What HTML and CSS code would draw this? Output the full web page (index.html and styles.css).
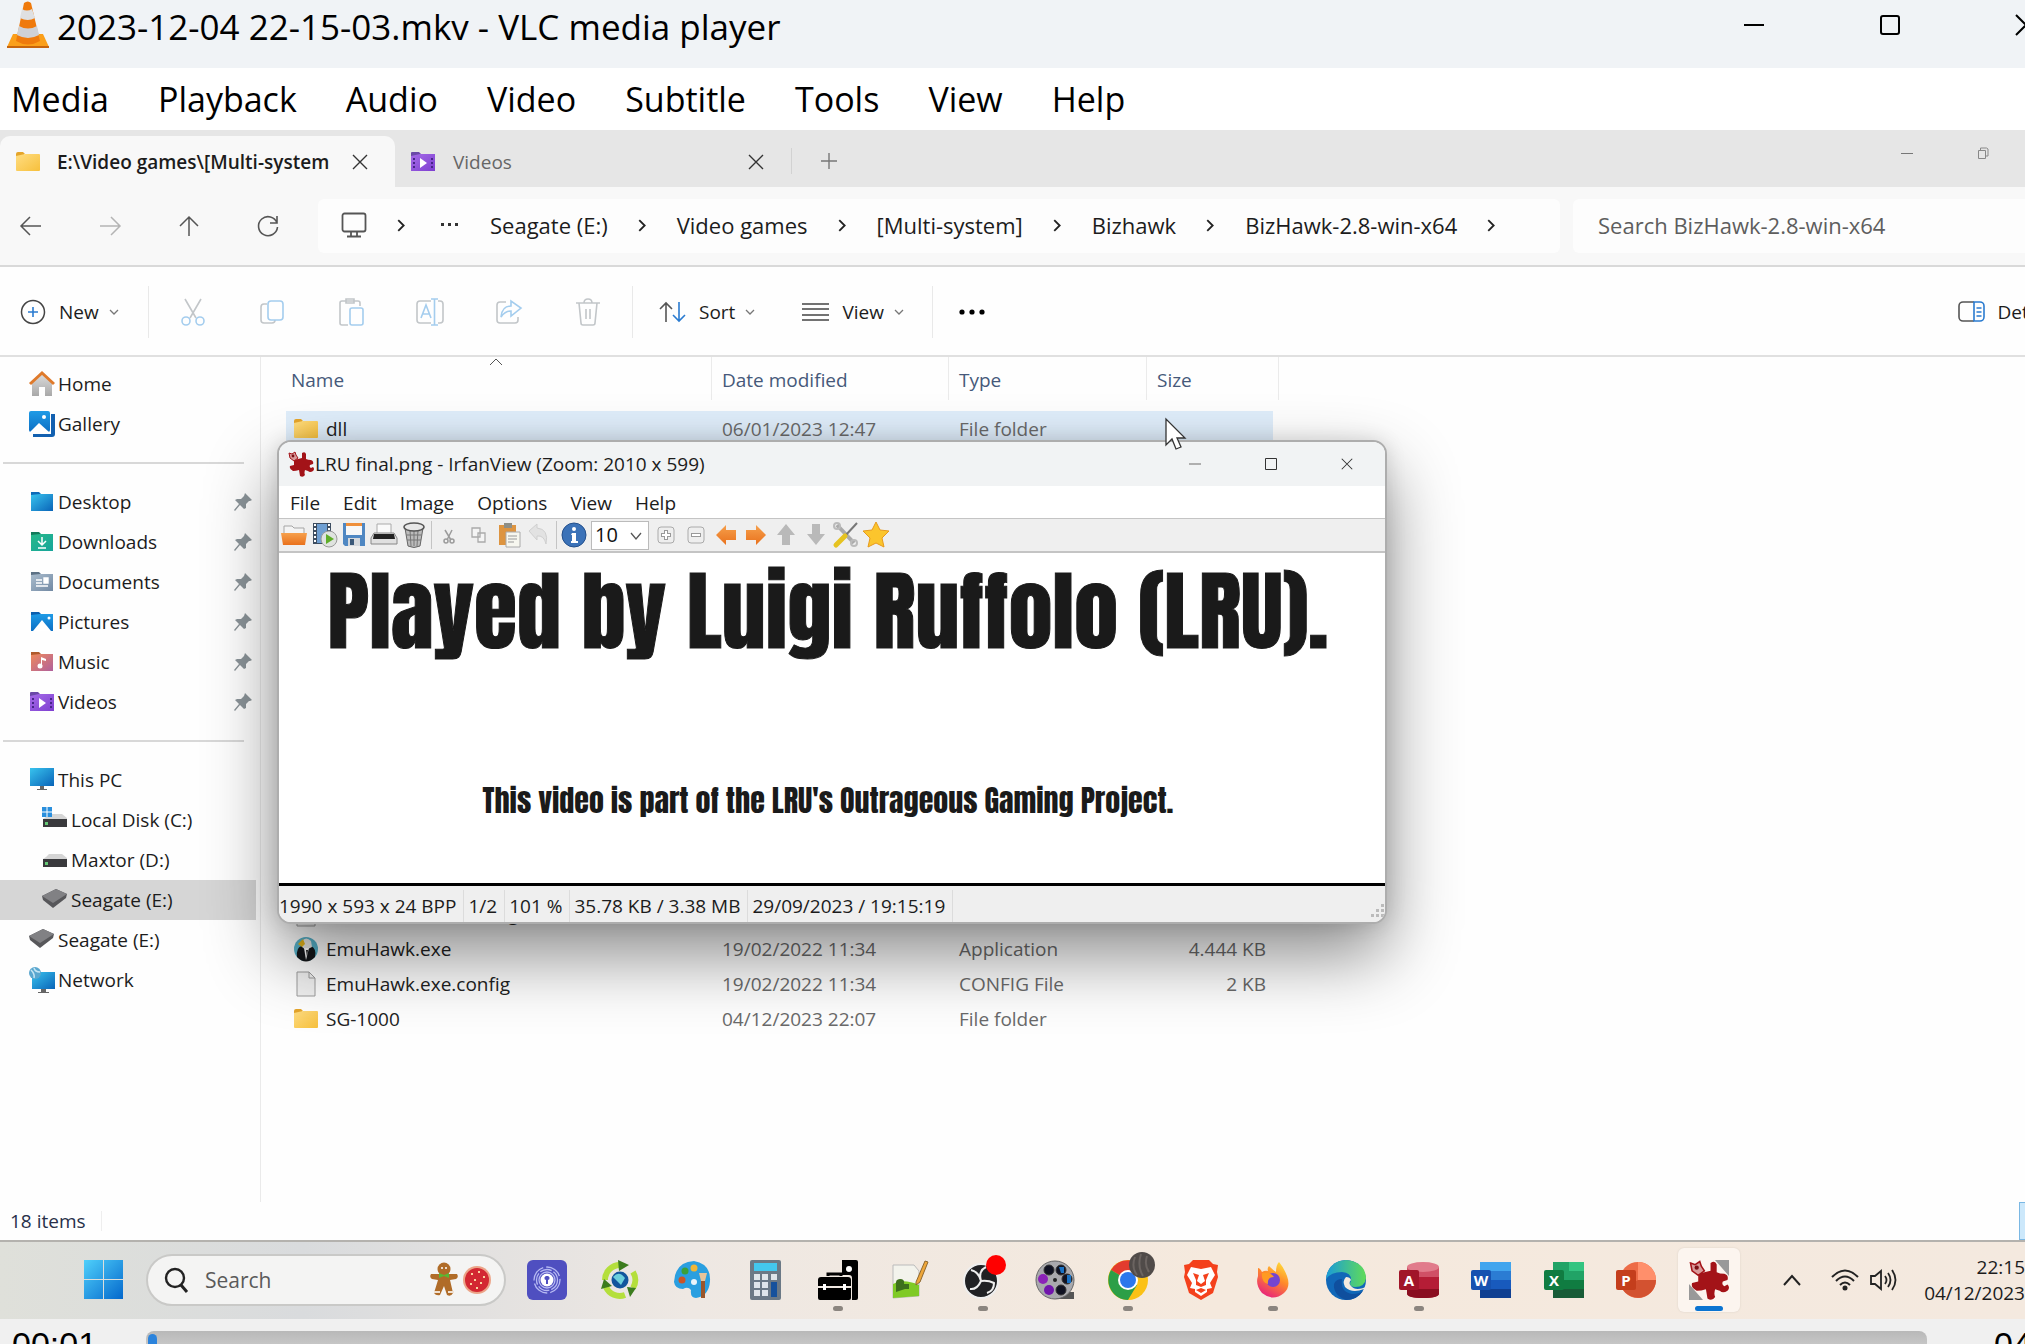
FILE: index.html
```html
<!DOCTYPE html>
<html lang="en">
<head>
<meta charset="utf-8">
<title>2023-12-04 22-15-03.mkv - VLC media player</title>
<link rel="stylesheet" href="styles.css">
</head>
<body>
<svg class="defs" width="0" height="0" aria-hidden="true">
  <defs>
    <linearGradient id="gYellow" x1="0" y1="0" x2="1" y2="1"><stop offset="0" stop-color="#ffdd82"/><stop offset="1" stop-color="#f7c03c"/></linearGradient>
    <linearGradient id="gBlue" x1="0" y1="0" x2="1" y2="1"><stop offset="0" stop-color="#38c3ee"/><stop offset="1" stop-color="#0a64b8"/></linearGradient>
    <linearGradient id="gTeal" x1="0" y1="0" x2="1" y2="1"><stop offset="0" stop-color="#27b98a"/><stop offset="1" stop-color="#17a59b"/></linearGradient>
    <linearGradient id="gSlate" x1="0" y1="0" x2="1" y2="1"><stop offset="0" stop-color="#a9bccd"/><stop offset="1" stop-color="#7289a3"/></linearGradient>
    <linearGradient id="gPhoto" x1="0" y1="0" x2="0" y2="1"><stop offset="0" stop-color="#1f9be6"/><stop offset="1" stop-color="#0c6fc4"/></linearGradient>
    <linearGradient id="gMusic" x1="0" y1="0" x2="1" y2="1"><stop offset="0" stop-color="#ef8a5c"/><stop offset="1" stop-color="#b0609c"/></linearGradient>
    <linearGradient id="gViolet" x1="0" y1="0" x2="1" y2="1"><stop offset="0" stop-color="#a56be8"/><stop offset="1" stop-color="#7e3fd0"/></linearGradient>
    <linearGradient id="gGrey" x1="0" y1="0" x2="0" y2="1"><stop offset="0" stop-color="#dcdcdc"/><stop offset="1" stop-color="#a8a8a8"/></linearGradient>
    <linearGradient id="gOrange" x1="0" y1="0" x2="0" y2="1"><stop offset="0" stop-color="#f6a04c"/><stop offset="1" stop-color="#e9711c"/></linearGradient>
    <linearGradient id="gWin" x1="0" y1="0" x2="1" y2="1"><stop offset="0" stop-color="#4fd0fb"/><stop offset="1" stop-color="#0468cc"/></linearGradient>
    <linearGradient id="gFire" x1="0.8" y1="0" x2="0.3" y2="1"><stop offset="0" stop-color="#ffde3a"/><stop offset="0.45" stop-color="#ff8a2a"/><stop offset="1" stop-color="#e8207e"/></linearGradient>
    <linearGradient id="gEdge" x1="0" y1="0" x2="1" y2="0"><stop offset="0" stop-color="#1a9bd8"/><stop offset="1" stop-color="#60dc58"/></linearGradient>
  </defs>
  <symbol id="folder" viewBox="0 0 24 20"><path d="M0 2a2 2 0 0 1 2-2h5l2 2h-1v4H0z" fill="#e5a52a"/><path d="M0 4 9 2h14a1 1 0 0 1 1 1v15a1 1 0 0 1-1 1H1a1 1 0 0 1-1-1z" fill="url(#gYellow)"/></symbol>
  <symbol id="videos" viewBox="0 0 24 20"><path d="M0 1a1 1 0 0 1 1-1h7l2 2v3H0z" fill="#6b49a8"/><path d="M0 4 9 2h15v17H0z" fill="url(#gViolet)"/><path d="M2 6h2v2H2zM2 10h2v2H2zM2 14h2v2H2zM20 6h2v2h-2zM20 10h2v2h-2zM20 14h2v2h-2z" fill="#472588"/><path d="m9 6 7 5-7 5z" fill="#fff"/></symbol>
  <symbol id="pin" viewBox="0 0 18 18"><path d="m11 0 7 7-2 1-1 0-3 3v4l-2 1-4-4-5 6-1-1 5-6-4-4 2-1 4 0 3-3z" fill="#8b9499"/></symbol>
  <symbol id="chev" viewBox="0 0 12 12"><path d="m3 1 5 5-5 5" fill="none" stroke="#222" stroke-width="1.7"/></symbol>
  <symbol id="down" viewBox="0 0 10 10"><path d="m1 3 4 4 4-4" fill="none" stroke="#777" stroke-width="1.3"/></symbol>
  <symbol id="x" viewBox="0 0 16 16"><path d="m1 1 14 14M15 1 1 15" fill="none" stroke="#333" stroke-width="1.4"/></symbol>
  <symbol id="disk" viewBox="0 0 24 18"><path d="m3 6 3-3h13l5 4v3H0V8z" fill="#d5d5d5"/><path d="M0 8h24v8H0z" fill="#39393c"/><path d="M2 11h3v3H2z" fill="#65c875"/></symbol>
  <symbol id="drive" viewBox="0 0 25 19"><path d="M0 7 14 0l11 5-1 4-13 10L1 11z" fill="#57575a"/><path d="M0 7 14 0l11 5-14 9z" fill="#818184"/></symbol>
  <symbol id="page" viewBox="0 0 20 26"><path d="M1 1h12l6 6v18H1z" fill="#f1f1f1" stroke="#9c9c9c"/><path d="M13 1v6h6" fill="none" stroke="#9c9c9c"/></symbol>
  <symbol id="splat" viewBox="0 0 26 26"><path d="M14 2q3-2 4 1v5q2 1 5 1 3 1 2 4l-3 1q-1 2 1 3l2-1q2 2 0 4-3 2-5 0l-3-1q-1 3 0 5-2 3-5 1l-1-6q-3 1-6 1-4-2-3-5l4-1V9l8-2z" fill="#a31318"/><path d="m1 2 3 1 3-2 1 3 2 3-4 3-4-3z" fill="#d99a9a" stroke="#a31318"/><circle cx="5" cy="5" r="1.4" fill="#7a1014"/></symbol>
</svg>

<header class="vlc-title">
  <svg class="cone" viewBox="0 0 42 48"><path d="m6 33-6 13v1h42v-1l-6-13z" fill="#fb9f1a"/><path d="M0 45h42v2H0z" fill="#c8650c"/><path d="M17 2q4-3 7 0l9 38q-12 7-24 0z" fill="#ef7a0c"/><path d="m15 8-2 9q8 4 15 0l-3-9q-5 3-10 0z" fill="#dfe0e2"/><path d="m12 25-2 9q11 6 22 0l-2-9q-9 5-18 0z" fill="#cfd1d5"/></svg>
  <h1>2023-12-04 22-15-03.mkv - VLC media player</h1>
  <div class="vlc-controls">
    <button aria-label="Minimise"><svg width="22" height="22"><path d="M1 11h20" stroke="#000" stroke-width="2"/></svg></button>
    <button aria-label="Maximise"><svg width="22" height="22"><rect x="2" y="2" width="18" height="18" rx="2" fill="none" stroke="#000" stroke-width="2"/></svg></button>
    <button aria-label="Close"><svg width="22" height="22"><path d="m1 1 20 20M21 1 1 21" stroke="#000" stroke-width="2"/></svg></button>
  </div>
</header>
<nav class="vlc-menu">
  <button>Media</button><button>Playback</button><button>Audio</button><button>Video</button><button>Subtitle</button><button>Tools</button><button>View</button><button>Help</button>
</nav>

<main class="explorer">
  <div class="tabs">
    <div class="tab tab-active"><svg width="24" height="20"><use href="#folder"/></svg><span class="tab-name">E:\Video games\[Multi-system</span><button aria-label="Close tab"><svg width="16" height="16"><use href="#x"/></svg></button></div>
    <div class="tab"><svg width="24" height="20"><use href="#videos"/></svg><span class="tab-name">Videos</span><button aria-label="Close tab"><svg width="16" height="16"><use href="#x"/></svg></button></div>
    <button class="tab-new" aria-label="New tab"><svg width="18" height="18"><path d="M9 1v16M1 9h16" stroke="#777" stroke-width="1.4"/></svg></button>
    <div class="win-controls">
      <button aria-label="Minimise"><svg width="12" height="12"><path d="M0 6.500h12" stroke="#777"/></svg></button>
      <button aria-label="Restore"><svg width="12" height="12"><path d="M1.500 3.500h7v8h-7zM3.500 3V1h6l1.500 1v7H9" fill="none" stroke="#888"/></svg></button>
      <button aria-label="Close"><svg width="12" height="12"><use href="#x"/></svg></button>
    </div>
  </div>

  <div class="address-row">
    <div class="history">
      <button aria-label="Back"><svg width="22" height="22"><path d="M21 11H2M10 2l-9 9 9 9" fill="none" stroke="#555" stroke-width="1.500"/></svg></button>
      <button aria-label="Forward"><svg width="22" height="22"><path d="M1 11h19M12 2l9 9-9 9" fill="none" stroke="#b4b4b4" stroke-width="1.500"/></svg></button>
      <button aria-label="Up"><svg width="22" height="22"><path d="M11 21V2M2 11l9-9 9 9" fill="none" stroke="#555" stroke-width="1.500"/></svg></button>
      <button aria-label="Refresh"><svg width="22" height="22"><path d="M20 8A9.500 9.500 0 1 0 20.500 12M20 1v7h-7" fill="none" stroke="#555" stroke-width="1.600"/></svg></button>
    </div>
    <div class="crumbs">
      <svg width="26" height="26"><rect x="1.500" y="1.500" width="23" height="18" rx="2" fill="none" stroke="#555" stroke-width="1.800"/><path d="M10 20v4M16 20v4M6 24.500h14" stroke="#555" stroke-width="1.800"/></svg>
      <svg width="13" height="13"><use href="#chev"/></svg>
      <svg width="26" height="13"><path d="M5 4h3v3H5zM12 4h3v3h-3zM19 4h3v3h-3z" fill="#333"/></svg>
      <a href="#">Seagate (E:)</a><svg width="13" height="13"><use href="#chev"/></svg>
      <a href="#">Video games</a><svg width="13" height="13"><use href="#chev"/></svg>
      <a href="#">[Multi-system]</a><svg width="13" height="13"><use href="#chev"/></svg>
      <a href="#">Bizhawk</a><svg width="13" height="13"><use href="#chev"/></svg>
      <a href="#">BizHawk-2.8-win-x64</a><svg width="13" height="13"><use href="#chev"/></svg>
    </div>
    <input class="folder-search" type="text" aria-label="Search folder" placeholder="Search BizHawk-2.8-win-x64">
  </div>

  <div class="commands">
    <button class="cmd cmd-new"><svg width="26" height="26"><circle cx="13" cy="13" r="11.500" fill="none" stroke="#444" stroke-width="1.500"/><path d="M13 8v10M8 13h10" stroke="#2a7bd0" stroke-width="1.600"/></svg>New<svg class="arrow" width="10" height="10"><use href="#down"/></svg></button>
    <div class="cmd-icons">
      <button aria-label="Cut"><svg width="26" height="28" fill="none" stroke-width="1.600"><path d="m5 1 11 19M21 1 10 20" stroke="#c2c6c9"/><circle cx="6" cy="23" r="4" stroke="#a4cdee"/><circle cx="20" cy="23" r="4" stroke="#a4cdee"/></svg></button>
      <button aria-label="Copy"><svg width="26" height="28" fill="none" stroke-width="1.600"><path d="M8 6H5a3 3 0 0 0-3 3v13a3 3 0 0 0 3 3h8a3 3 0 0 0 3-3" stroke="#c2c6c9"/><rect x="9" y="3" width="15" height="19" rx="3" stroke="#a4cdee"/></svg></button>
      <button aria-label="Paste"><svg width="26" height="28" fill="none" stroke-width="1.600"><path d="M10 27H4a2 2 0 0 1-2-2V5a2 2 0 0 1 2-2h16a2 2 0 0 1 2 2v3M8 1h8v4H8z" stroke="#c2c6c9"/><rect x="12" y="10" width="13" height="17" rx="2" stroke="#a4cdee"/></svg></button>
      <button aria-label="Rename"><svg width="28" height="28" fill="none" stroke-width="1.600"><path d="M15 3H4a3 3 0 0 0-3 3v16a3 3 0 0 0 3 3h11M22 3h2a3 3 0 0 1 3 3v16a3 3 0 0 1-3 3h-2" stroke="#c2c6c9"/><path d="m5 20 5-13 5 13M7 16h6M15 1h7M15 27h7M18.500 1v26" stroke="#a4cdee"/></svg></button>
      <button aria-label="Share"><svg width="26" height="28" fill="none" stroke-width="1.600"><path d="M10 4H4a3 3 0 0 0-3 3v15a3 3 0 0 0 3 3h15a3 3 0 0 0 3-3v-3" stroke="#c2c6c9"/><path d="M15 3v5q-9 0-10 11 4-6 10-6v5l10-8z" stroke="#a4cdee"/></svg></button>
      <button aria-label="Delete"><svg width="26" height="28" fill="none" stroke="#c2c6c9" stroke-width="1.600"><path d="M1 5h24M4 5l2 20a2 2 0 0 0 2 2h10a2 2 0 0 0 2-2l2-20M9 5q0-4 4-4t4 4M11 11v10M15 11v10"/></svg></button>
    </div>
    <div class="cmd-group">
      <button class="cmd"><svg width="27" height="22" fill="none" stroke-width="1.600"><path d="M7 21V2M1 8l6-6 6 6" stroke="#555"/><path d="M20 1v19M14 14l6 6 6-6" stroke="#2a7bd0"/></svg>Sort<svg class="arrow" width="10" height="10"><use href="#down"/></svg></button>
      <button class="cmd"><svg width="27" height="20"><path d="M0 2h27M0 7h27M0 13h27M0 18h27" stroke="#444" stroke-width="1.600"/></svg>View<svg class="arrow" width="10" height="10"><use href="#down"/></svg></button>
    </div>
    <button class="cmd cmd-more" aria-label="See more"><svg width="27" height="8"><circle cx="3" cy="4" r="2.600"/><circle cx="13" cy="4" r="2.600"/><circle cx="23" cy="4" r="2.600"/></svg></button>
    <button class="cmd cmd-details"><svg width="27" height="22" fill="none" stroke-width="1.600"><path d="M16 1H5a4 4 0 0 0-4 4v11a4 4 0 0 0 4 4h11" stroke="#555"/><path d="M16 1h6a4 4 0 0 1 4 4v11a4 4 0 0 1-4 4h-6zM18.500 7h5M18.500 11h5M18.500 15h5" stroke="#2a7bd0"/></svg>Details</button>
  </div>

  <div class="panes">
    <nav class="sidebar">
      <ul>
        <li><svg viewBox="0 0 26 26"><path d="M3 12 13 3l10 9v13h-7v-9h-6v9H3z" fill="url(#gGrey)"/><path d="M1 13 13 2l12 11" fill="none" stroke="#df7a2b" stroke-width="3"/></svg><a href="#">Home</a></li>
        <li><svg viewBox="0 0 26 26"><path d="M22 3h4v20q0 3-3 3H4v-3h18z" fill="#1260b0"/><rect width="21" height="21" rx="2" fill="url(#gPhoto)"/><path d="m1 21 9-9 10 9z" fill="#fff"/><circle cx="15" cy="6" r="2" fill="#fff"/></svg><a href="#">Gallery</a></li>
      </ul>
      <hr>
      <ul>
        <li><svg viewBox="0 0 26 26"><path d="M2 3h8l2 2v3H2z" fill="#0c6ab8"/><path d="M2 6 11 5h13v17H2z" fill="url(#gBlue)"/></svg><a href="#">Desktop</a><svg class="pin"><use href="#pin"/></svg></li>
        <li><svg viewBox="0 0 26 26"><path d="M2 3h8l2 2v3H2z" fill="#117a5a"/><path d="M2 6 11 5h13v17H2z" fill="url(#gTeal)"/><path d="M13 8v8m-4-4 4 4 4-4M9 19h8" fill="none" stroke="#fff" stroke-width="1.500"/></svg><a href="#">Downloads</a><svg class="pin"><use href="#pin"/></svg></li>
        <li><svg viewBox="0 0 26 26"><path d="M2 3h8l2 2v3H2z" fill="#5c7185"/><path d="M2 6 11 5h13v17H2z" fill="url(#gSlate)"/><path d="M7 11h6M7 14h6M7 17h12M15 9h4v5h-4z" fill="#fff" stroke="#fff" stroke-width="1.400"/></svg><a href="#">Documents</a><svg class="pin"><use href="#pin"/></svg></li>
        <li><svg viewBox="0 0 26 26"><path d="M2 3h8l2 2v3H2z" fill="#0b5fae"/><path d="M2 6 11 5h13v17H2z" fill="url(#gPhoto)"/><path d="m4 22 9-11 9 11z" fill="#fff"/><circle cx="20" cy="9" r="1.500" fill="#fff"/></svg><a href="#">Pictures</a><svg class="pin"><use href="#pin"/></svg></li>
        <li><svg viewBox="0 0 26 26"><path d="M2 3h8l2 2v3H2z" fill="#b05a2c"/><path d="M2 6 11 5h13v17H2z" fill="url(#gMusic)"/><path d="M12 17V8l5 2v2l-4-1v6" fill="#fff"/><circle cx="11" cy="17" r="2.500" fill="#fff"/></svg><a href="#">Music</a><svg class="pin"><use href="#pin"/></svg></li>
        <li><svg viewBox="-1 -3 26 26"><use href="#videos" width="24" height="20"/></svg><a href="#">Videos</a><svg class="pin"><use href="#pin"/></svg></li>
      </ul>
      <hr>
      <ul>
        <li><svg viewBox="0 0 26 26"><path d="M1 1h24v18H1z" fill="url(#gBlue)"/><path d="M11 19h4v3h3v1H8v-1h3z" fill="#666"/></svg><a href="#">This PC</a></li>
        <li class="nested"><svg viewBox="0 0 26 26"><use href="#disk" x="1" y="4" width="24" height="18"/><path d="M0 0h10v10H0z" fill="#2a8fdd"/><path d="M5 0v10M0 5h10" stroke="#fff"/></svg><a href="#">Local Disk (C:)</a></li>
        <li class="nested"><svg viewBox="0 0 26 26"><use href="#disk" x="1" y="4" width="24" height="18"/></svg><a href="#">Maxtor (D:)</a></li>
        <li class="nested selected"><svg viewBox="0 0 26 26"><use href="#drive" y="2" width="25" height="19"/></svg><a href="#">Seagate (E:)</a></li>
        <li><svg viewBox="0 0 26 26"><use href="#drive" y="2" width="25" height="19"/></svg><a href="#">Seagate (E:)</a></li>
        <li><svg viewBox="0 0 26 26"><path d="M3 5h23v17H3z" fill="url(#gBlue)"/><path d="M12 22h5v3h3v1H9v-1h3z" fill="#666"/><circle cx="6" cy="6" r="6" fill="#5aa7cf"/><path d="M2 3q4 4 3 8M5 1q1 4 6 4" stroke="#c6e6f4" fill="none" stroke-width="1.500"/></svg><a href="#">Network</a></li>
      </ul>
    </nav>
    <section class="files">
      <table>
        <thead><tr><th class="c-name"><span>Name<svg class="sorted" width="14" height="8"><path d="m1 7 6-6 6 6" fill="none" stroke="#555"/></svg></span></th><th class="c-date"><span>Date modified</span></th><th class="c-type"><span>Type</span></th><th class="c-size"><span>Size</span></th></tr></thead>
        <tbody>
          <tr class="hover"><td class="name"><div><svg width="24" height="20"><use href="#folder"/></svg>dll</div></td><td>06/01/2023 12:47</td><td>File folder</td><td></td></tr>
          <tr class="covered"><td colspan="4"></td></tr>
          <tr><td class="name"><div><svg width="24" height="26"><use href="#page"/></svg>DiscoHawk.exe.config</div></td><td>19/02/2022 11:34</td><td>CONFIG File</td><td class="size">2 KB</td></tr>
          <tr><td class="name"><div><svg width="24" height="24"><circle cx="12" cy="12" r="12" fill="#58b4cc"/><path d="M3 20Q2 10 8 9l4-1 5 1q6 3 4 11-9 9-18 0z" fill="#15171a"/><path d="M8 4q4-5 9 0l1 6-6 3-4-3z" fill="#e9e9e6"/><path d="m4 7 5-5 2 5-3 3z" fill="#e4b51c"/><path d="m10 11 2 12 3-12z" fill="#fff"/><path d="m12 13 1 7 1-7z" fill="#222"/></svg>EmuHawk.exe</div></td><td>19/02/2022 11:34</td><td>Application</td><td class="size">4.444 KB</td></tr>
          <tr><td class="name"><div><svg width="24" height="26"><use href="#page"/></svg>EmuHawk.exe.config</div></td><td>19/02/2022 11:34</td><td>CONFIG File</td><td class="size">2 KB</td></tr>
          <tr><td class="name"><div><svg width="24" height="20"><use href="#folder"/></svg>SG-1000</div></td><td>04/12/2023 22:07</td><td>File folder</td><td></td></tr>
        </tbody>
      </table>
    </section>
  </div>
  <footer class="status"><span>18 items</span><button aria-label="Details view"></button></footer>

  <section class="viewer" aria-label="IrfanView">
    <div class="viewer-title">
      <svg width="26" height="26"><use href="#splat"/></svg><span>LRU final.png - IrfanView (Zoom: 2010 x 599)</span>
      <div class="viewer-controls">
        <button aria-label="Minimise"><svg width="12" height="12"><path d="M0 6h12" stroke="#999" stroke-width="1.500"/></svg></button>
        <button aria-label="Maximise"><svg width="12" height="12"><path d="M.5.500h11v11H.5z" fill="none" stroke="#333"/></svg></button>
        <button aria-label="Close"><svg width="12" height="12"><use href="#x"/></svg></button>
      </div>
    </div>
    <div class="viewer-menu"><button>File</button><button>Edit</button><button>Image</button><button>Options</button><button>View</button><button>Help</button></div>
    <div class="viewer-tools">
      <button aria-label="Open"><svg viewBox="0 0 26 26"><path d="M3 12V4h8l2 2h10v6z" fill="#f4f4f4" stroke="#a5a5a5"/><path d="M0 11h26l-2 12H2z" fill="url(#gOrange)"/></svg></button>
      <button aria-label="Slideshow"><svg viewBox="0 0 26 26"><path d="M2 1h18v21H2z" fill="#3d4d60"/><path d="M6 2h10v19H6z" fill="#6f9fd2"/><path d="M3 3h2M3 7h2M3 11h2M3 15h2M3 19h2M17 3h2M17 7h2" stroke="#fff" stroke-width="2"/><circle cx="18" cy="17" r="8" fill="#dfe3df" stroke="#999"/><path d="m15 12 8 5-8 5z" fill="#5fae28"/></svg></button>
      <button aria-label="Save"><svg viewBox="0 0 26 26"><path d="M2 1h22v23H4l-2-2z" fill="#4f87c2"/><path d="M5 1h16v12H5z" fill="#f7f7f7"/><path d="M5 1h16v3H5z" fill="#ef8f3a"/><path d="M7 16h12v8H7z" fill="#d5d8dc"/><path d="M9 17h4v6H9z" fill="#3a5878"/></svg></button>
      <button aria-label="Print"><svg viewBox="0 0 26 26"><path d="M6 2h14v10H6z" fill="#fafafa" stroke="#aaa"/><path d="M3 11h20l3 5v6H0v-6z" fill="#e0e0e0" stroke="#888"/><path d="M3 12h20l1 5H2z" fill="#222"/></svg></button>
      <button aria-label="Delete"><svg viewBox="0 0 26 26"><path d="M4 6h18l-3 18q-6 3-12 0z" fill="#bcbcbc" stroke="#666"/><path d="M9 8l1 16M13 8v16M17 8l-1 16M5 13h16M6 18h14" stroke="#777"/><ellipse cx="13" cy="5" rx="10" ry="4" fill="#e8e8e8" stroke="#555" stroke-width="1.500"/></svg></button>
      <i></i>
      <button aria-label="Cut"><svg viewBox="0 0 26 26" fill="none" stroke="#9b9b9b" stroke-width="1.500"><path d="m9 8 6 10M16 8l-5 10"/><circle cx="10" cy="19" r="2"/><circle cx="16" cy="19" r="2"/></svg></button>
      <button aria-label="Copy"><svg viewBox="0 0 26 26" fill="#f4f4f4" stroke="#aaa" stroke-width="1.300"><path d="M6 6h8v9H6zM12 11h7v9h-7z"/></svg></button>
      <button aria-label="Paste"><svg viewBox="0 0 26 26"><path d="M3 3h17v20H3z" fill="#dd9440"/><path d="M8 1h8v5H8z" fill="#8e8e86"/><path d="M10 10h14v15H10z" fill="#f7f7ef" stroke="#aaa"/><path d="M12 14h9M12 17h9M12 20h6" stroke="#999"/></svg></button>
      <button aria-label="Undo"><svg viewBox="0 0 26 26"><path d="m3 9 8-7v4q12 1 9 16-2-9-9-8v4z" fill="#e2e2e2" stroke="#cfcfcf"/></svg></button>
      <i></i>
      <button aria-label="Information"><svg viewBox="0 0 26 26"><circle cx="13" cy="13" r="12" fill="#3b72b8" stroke="#24508c"/><path d="M11 11h4v8h2v2h-7v-2h1v-6h-1z" fill="#fff"/><circle cx="13" cy="7" r="2" fill="#fff"/></svg></button>
      <div class="step"><select aria-label="Zoom step"><option>10</option></select><svg class="step-arrow" viewBox="0 0 12 12"><path d="m1 3 5 6 5-6" fill="none" stroke="#555" stroke-width="1.300"/></svg></div>
      <button aria-label="Zoom in"><svg viewBox="0 0 26 26"><rect x="5" y="5" width="16" height="16" rx="3" fill="#eee" stroke="#aaa"/><path d="M13 8v10M8 13h10" stroke="#999" stroke-width="4"/><path d="M13 9v8M9 13h8" stroke="#fff" stroke-width="2"/></svg></button>
      <button aria-label="Zoom out"><svg viewBox="0 0 26 26"><rect x="5" y="5" width="16" height="16" rx="3" fill="#eee" stroke="#aaa"/><path d="M8 13h10" stroke="#999" stroke-width="4"/><path d="M9 13h8" stroke="#fff" stroke-width="2"/></svg></button>
      <button aria-label="Previous file"><svg viewBox="0 0 26 26"><path d="M3 13 13 3v5h10v10H13v5z" fill="url(#gOrange)"/></svg></button>
      <button aria-label="Next file"><svg viewBox="0 0 26 26"><path d="M23 13 13 3v5H3v10h10v5z" fill="url(#gOrange)"/></svg></button>
      <button aria-label="Previous page"><svg viewBox="0 0 26 26"><path d="m13 2 9 11h-5v10H9V13H4z" fill="#b9b9b9"/></svg></button>
      <button aria-label="Next page"><svg viewBox="0 0 26 26"><path d="m13 23 9-11h-5V2H9v10H4z" fill="#b9b9b9"/></svg></button>
      <button aria-label="Settings"><svg viewBox="0 0 26 26" fill="none"><path d="m4 3 17 18" stroke="#aaa" stroke-width="4"/><circle cx="4" cy="4" r="3" stroke="#bbb" stroke-width="2"/><circle cx="21" cy="21" r="3" stroke="#bbb" stroke-width="2"/><path d="M24 1 12 14" stroke="#777" stroke-width="2"/><path d="m12 14-9 9" stroke="#e6c321" stroke-width="5" stroke-linecap="round"/></svg></button>
      <button aria-label="About"><svg viewBox="0 0 26 26"><path d="m13 0 4 8 9 1-7 7 2 9-8-4-8 4 2-9-7-7 9-1z" fill="#fbc52d" stroke="#e79a1c"/></svg></button>
    </div>
    <div class="picture">
      <p class="headline">Played by Luigi Ruffolo (LRU).</p>
      <p class="caption">This video is part of the LRU's Outrageous Gaming Project.</p>
    </div>
    <div class="viewer-status"><span>1990 x 593 x 24 BPP</span><span>1/2</span><span>101 %</span><span>35.78 KB / 3.38 MB</span><span>29/09/2023 / 19:15:19</span>
      <svg class="grip" width="14" height="14"><path d="M10 0h3v3h-3zM5 5h3v3H5zM10 5h3v3h-3zM0 10h3v3H0zM5 10h3v3H5zM10 10h3v3h-3z" fill="#bbb"/></svg></div>
  </section>
  <svg class="cursor" width="22" height="32"><path d="M1 1v26l6-6 4 10 5-2-4-9h8z" fill="#fff" stroke="#333" stroke-width="1.300"/></svg>
</main>

<div class="taskbar">
  <button class="start" aria-label="Start"><svg width="39" height="39"><path d="M0 0h19v19H0zM20 0h19v19H20zM0 20h19v19H0zM20 20h19v19H20z" fill="url(#gWin)"/></svg></button>
  <label class="search"><svg width="26" height="26"><circle cx="12" cy="11" r="9" fill="none" stroke="#222" stroke-width="2.400"/><path d="m18 18 6 7" stroke="#222" stroke-width="3"/></svg>
    <input type="text" placeholder="Search" aria-label="Search">
    <svg width="62" height="36"><g fill="#b06c28"><circle cx="14" cy="7" r="6.500"/><path d="M9 12h10l8 0q2 3-1 5l-6 1 3 13q-2 4-6 2l-3-9-4 9q-4 1-6-2l4-13-6-1q-3-2-1-5z"/></g><path d="m9 11 5 2 5-2v5l-5-2-5 2z" fill="#5ab832"/><path d="M4 30h6M18 30h6" stroke="#f0e0d0" stroke-width="2"/><circle cx="12" cy="6" r="1" fill="#fff"/><circle cx="16" cy="6" r="1" fill="#fff"/><circle cx="47" cy="18" r="14" fill="#eca488"/><circle cx="47" cy="18" r="12" fill="#d32832"/><path d="M41 12h2M48 10h2M53 15h2M44 18h2M50 21h2M40 22h2M46 26h2" stroke="#f9d5a0" stroke-width="2"/></svg>
  </label>
  <div class="apps">
    <button aria-label="Authenticator"><svg viewBox="0 0 40 40"><rect width="40" height="40" rx="6" fill="#4f4fc0"/><g fill="none" stroke="#b6b9f2" stroke-width="1.300"><circle cx="20" cy="20" r="13" stroke-dasharray="17 3"/><circle cx="20" cy="20" r="10.500" stroke-dasharray="12 2"/><circle cx="20" cy="20" r="8"/></g><circle cx="20" cy="20" r="6.500" fill="#fff"/><path d="M20 16a2 2 0 0 1 1 4v4h-2v-4a2 2 0 0 1 1-4z" fill="#4f4fc0"/></svg></button>
    <button aria-label="Refresh tool"><svg viewBox="0 0 40 40"><g fill="none" stroke="#b4df3c" stroke-width="6"><path d="M5 20A15 15 0 0 1 20 5"/><path d="M33 12a15 15 0 0 1 0 16"/><path d="M25 35A15 15 0 0 1 6 27"/></g><path d="m18 0 11 5-10 6zM27 27l9 1-6 9zM1 29l3-10 8 7z" fill="#3c7c1e"/><circle cx="20" cy="20" r="8.500" fill="#12559d"/><path d="M13 17q6-7 12 1l-4 7z" fill="#6cd0dc"/></svg></button>
    <button aria-label="Paint"><svg viewBox="0 0 40 40"><path d="M2 22Q3 2 22 1q17 3 16 20-1 15-14 17-6 0-5-8-3-4-8-1-8 0-9-7z" fill="#2a9fe0"/><circle cx="10" cy="20" r="3.500" fill="#cb5426"/><circle cx="13" cy="11" r="3.500" fill="#3ba03a"/><circle cx="22" cy="8" r="3.500" fill="#efb637"/><circle cx="22" cy="22" r="3" fill="#eaf4fa"/><path d="M31 20v18" stroke="#9a562b" stroke-width="4"/><path d="M27 13h8l-2 8h-4z" fill="#e7c49a"/></svg></button>
    <button aria-label="Calculator"><svg viewBox="0 0 40 40"><rect x="5" width="31" height="40" rx="2" fill="#6b7986"/><path d="M9 3h23v8H9z" fill="#43c7ee"/><path d="M9 14h6v6H9zM17 14h6v6h-6zM26 14h6v6h-6zM9 22h6v6H9zM17 22h6v6h-6zM9 30h6v6H9zM17 30h6v6h-6z" fill="#dfe5ea"/><path d="M26 22h6v15h-6z" fill="#16519c"/></svg></button>
    <button class="running" aria-label="Toolbox"><svg viewBox="0 0 40 40"><path d="M24 0h14q2 0 2 2v36q0 2-2 2h-4V18q0-3-3-3h-7z"/><circle cx="31" cy="9" r="3" fill="#fff"/><path d="M10 16v-2h13v2" fill="none" stroke="#000" stroke-width="3"/><path d="M3 17h27q3 0 3 3v6H0v-6q0-3 3-3zM0 28h33v10q0 2-2 2H2q-2 0-2-2z"/><path d="M5 24h3v6H5zM25 24h3v6h-3z" fill="#fff"/></svg></button>
    <button aria-label="Notepad++"><svg viewBox="0 0 40 40"><path d="m3 5 21 0 5 6v25l-26 2z" fill="#f3f3ec" stroke="#bbb"/><path d="M3 24q10-6 26 1v11l-26 2z" fill="#7fca25"/><path d="M6 25q-1-6 4-6t4 5h5v5h-4l-9 3z" fill="#3d6f1c"/><path d="m26 22 9-21 3 1-8 20-4 3z" fill="#efa73a" stroke="#8e6830"/></svg></button>
    <button class="running" aria-label="OBS Studio"><svg viewBox="0 0 40 40"><circle cx="18" cy="21" r="17" fill="#202124" stroke="#eee" stroke-width="2"/><path d="M8 10q8 2 10 11-4 9-11 8M18 21q7-1 13 2 0 8-7 10M18 21q-3-10 5-14" fill="none" stroke="#eee" stroke-width="2"/><circle cx="33" cy="5" r="10" fill="#f00"/></svg></button>
    <button aria-label="Movie Maker"><svg viewBox="0 0 40 40"><path d="M28 32h11v7H20z" fill="#555"/><circle cx="20" cy="20" r="19" fill="#a9a9ad" stroke="#666"/><g fill="#101222" stroke="#333"><circle cx="14" cy="10" r="5"/><circle cx="26" cy="10" r="5"/><circle cx="32" cy="19" r="5"/><circle cx="26" cy="30" r="5"/></g><path d="M24 7h5v6h-3zM32 15h4v8h-4z" fill="#1a72c4"/><circle cx="8" cy="19" r="5" fill="#8b22b8"/><circle cx="14" cy="30" r="5" fill="#7115ac"/><circle cx="20" cy="20" r="2" fill="#222"/></svg></button>
    <button class="running" aria-label="Chrome"><svg viewBox="0 0 40 40"><circle cx="20" cy="20" r="20" fill="#fbc116"/><path d="M20 20 3 10a20 20 0 0 1 35 1H20z" fill="#e33b2e"/><path d="M3 10a20 20 0 0 0 17 30l9-15-9-5z" fill="#2c9f47"/><circle cx="20" cy="20" r="10" fill="#fff"/><circle cx="20" cy="20" r="8" fill="#2b77ec"/><circle cx="34" cy="5" r="13" fill="#504b49"/><path d="M27-3q-4 10 2 18M33-6q-4 12 2 22M39-4q-3 9 2 16" stroke="#6b6461" stroke-width="2" fill="none"/></svg></button>
    <button aria-label="Brave"><svg viewBox="0 0 40 40"><path d="m12 0 4 0h12l4 4 5 1-1 7 1 5-5 16-12 7-12-7-5-16 1-5-1-7 5-1z" fill="#f4411c"/><path d="m10 7 10 2 10-2 4 8-5 8 2 5-5 1 0 3-6 4-6-4 0-3-5-1 2-5-5-8z" fill="#fff"/><path d="m12 13 6 2-2 6 4 3 4-3-2-6 6-2-3 7 0 5-5 2-5-2v-5zM15 30l5-2 5 2-5 3z" fill="#f4411c"/></svg></button>
    <button class="running" aria-label="Firefox"><svg viewBox="0 0 40 40"><path d="M5 8q2 0 4 4 3-2 6-1-1-3 1-5 4 4 7 6 0-7 3-10 5 6 8 14 4 11-3 17-11 9-22 0-7-8-4-17z" fill="url(#gFire)"/><circle cx="20" cy="20" r="7" fill="#7445d1"/><path d="M9 13q8-2 12 4-7 0-6 7-7-2-6-11z" fill="#ff9a22"/></svg></button>
    <button aria-label="Edge"><svg viewBox="0 0 40 40"><circle cx="20" cy="20" r="20" fill="#1168b8"/><path d="M0 19Q2 1 20 0q19 2 20 18-1 9-11 9-7-1-4-6 1-8-9-9Q5 12 0 19z" fill="url(#gEdge)"/><path d="M16 19q-2 13 10 15 7 0 11-3-6 9-17 9-13-5-12-16 2-5 8-5z" fill="#0f4f9e"/><path d="M20 17q-4 4-1 10 7 7 19 2l4 0V26q-12 6-17 0-3-3 0-6-1-3-5-3z" fill="#f5eadf"/></svg></button>
    <button class="running" aria-label="Access"><svg viewBox="0 0 40 40"><path d="M8 7v26q0 5 16 5t16-5V7z" fill="#b51d36"/><path d="M8 7v10h32V7z" fill="#d05066"/><path d="M8 29v5q1 4 16 4t16-4v-5z" fill="#8a0e20"/><ellipse cx="24" cy="7" rx="16" ry="5" fill="#e17b8b"/><rect y="10" width="20" height="20" rx="2" fill="#a11529"/><text x="10" y="26" class="letter">A</text></svg></button>
    <button aria-label="Word"><svg viewBox="0 0 40 40"><path d="M9 2h31v9H9z" fill="#41a5ee"/><path d="M9 11h31v9H9z" fill="#2b7cd3"/><path d="M9 20h31v9H9z" fill="#185abd"/><path d="M9 29h31v9H9z" fill="#103f91"/><rect y="10" width="20" height="20" rx="2" fill="#1652b0"/><text x="10" y="26" class="letter">W</text></svg></button>
    <button aria-label="Excel"><svg viewBox="0 0 40 40"><path d="M9 2h31v9H9z" fill="#33c481"/><path d="M9 11h31v9H9z" fill="#21a366"/><path d="M9 20h31v9H9z" fill="#107c41"/><path d="M9 29h31v9H9z" fill="#185c37"/><path d="M9 2h16v9H9z" fill="#21a366"/><rect y="10" width="20" height="20" rx="2" fill="#107c41"/><text x="10" y="26" class="letter">X</text></svg></button>
    <button aria-label="PowerPoint"><svg viewBox="0 0 40 40"><circle cx="22" cy="20" r="18" fill="#ed6c47"/><path d="M22 2a18 18 0 0 1 18 18H22z" fill="#ff8f6b"/><path d="M40 20a18 18 0 0 1-34 8l16-8z" fill="#d35230"/><rect y="10" width="20" height="20" rx="2" fill="#c43e1c"/><text x="10" y="26" class="letter">P</text></svg></button>
    <button class="running current" aria-label="IrfanView"><svg viewBox="0 0 40 40"><path d="M26 0h14v16zM0 24v16h14z" fill="#999"/><use href="#splat" width="40" height="40"/></svg></button>
  </div>
  <div class="tray">
    <svg width="18" height="12"><path d="m1 11 8-9 8 9" fill="none" stroke="#222" stroke-width="2"/></svg>
    <svg width="28" height="22" fill="none" stroke="#222" stroke-width="2"><path d="M1 8q13-13 26 0M5 12q9-9 18 0M9 16q5-5 10 0"/><circle cx="14" cy="19" r="1.500" fill="#222"/></svg>
    <svg width="28" height="22" fill="none" stroke="#222" stroke-width="1.800"><path d="M1 7h4l6-5v18l-6-5H1zM15 7q3 4 0 8M18 4q5 7 0 14M22 1q7 10 0 20"/></svg>
    <div class="clock"><time>22:15</time><time>04/12/2023</time></div>
  </div>
</div>
<footer class="seek"><span class="elapsed">00:01</span><input type="range" min="0" max="280" value="0" aria-label="Position"><span class="total">04:00</span></footer>
</body>
</html>
```
FILE: styles.css
```css
* { box-sizing: border-box; }
html, body { height: 100%; }
body {
  margin: 0;
  display: flex;
  flex-direction: column;
  overflow: hidden;
  font-family: "Open Sans", "Noto Sans", sans-serif;
  font-size: 19px;
  color: #1c1c1c;
  background: #fff;
}
button { font: inherit; color: inherit; background: none; border: 0; padding: 0; white-space: nowrap; }
a { color: inherit; text-decoration: none; }
ul { list-style: none; margin: 0; padding: 0; }
svg { flex: none; overflow: visible; }
.defs { position: absolute; }

/* VLC window */
.vlc-title { flex: none; height: 68px; display: flex; align-items: flex-start; background: #f0f3f6; padding-left: 7px; }
.cone { width: 42px; height: 48px; margin-top: 1px; }
.vlc-title h1 { margin: 0 0 0 8px; font-size: 35px; line-height: 54px; font-weight: 400; color: #000; white-space: nowrap; }
.vlc-controls { display: flex; margin: 0 -69px 0 auto; }
.vlc-controls button { width: 136px; height: 50px; display: grid; place-items: center; }
.vlc-menu { flex: none; height: 62px; display: flex; gap: 49px; padding-left: 11px; font-size: 34px; line-height: 62px; color: #000; }

/* File explorer */
.explorer { flex: 1; min-height: 0; position: relative; display: flex; flex-direction: column; background: #fefefe; }
.tabs { flex: none; height: 57px; display: flex; align-items: flex-end; background: #e6e6e6; }
.tab { width: 396px; height: 51px; display: flex; align-items: center; padding: 0 27px 0 16px; color: #666; }
.tab-active { width: 395px; background: #f8f8f8; border-radius: 10px 10px 0 0; color: #1c1c1c; font-weight: 600; }
.tab-name { margin: 0 auto 0 17px; white-space: nowrap; }
.tab-active + .tab .tab-name { margin-left: 18px; }
.tab button { display: flex; }
.tab-new { width: 75px; height: 26px; margin-bottom: 13px; border-left: 1px solid #d2d2d2; display: grid; place-items: center; }
.win-controls { display: flex; margin: 0 -72px 11px auto; }
.win-controls button { width: 76px; height: 46px; display: grid; place-items: center; }
.address-row { flex: none; height: 80px; display: flex; align-items: center; background: #f8f8f8; border-bottom: 2px solid #d9d9d9; font-size: 22px; }
.history { display: flex; flex: none; width: 318px; }
.history button { flex: none; width: 79px; height: 40px; padding-right: 18px; display: grid; place-items: center; }
.crumbs { flex: 1; height: 54px; display: flex; align-items: center; gap: 28px; padding: 0 0 2px 23px; background: #fdfdfd; border-radius: 6px; white-space: nowrap; }
.folder-search { width: 452px; height: 54px; margin-left: 13px; padding: 0 0 2px 25px; font: inherit; color: #555; background: #fdfdfd; border: 0; border-radius: 6px 0 0 6px; }
.folder-search::placeholder { color: #5e5e5e; opacity: 1; }
.commands { flex: none; height: 90px; display: flex; align-items: center; padding-top: 1px; border-bottom: 2px solid #e0e0e0; }
.cmd { display: flex; align-items: center; gap: 13px; }
.cmd .arrow { margin-left: -3px; }
.cmd-new { margin-left: 20px; width: 128px; height: 52px; }
.cmd-icons { display: flex; height: 52px; padding: 0 5px 0 4px; border: solid #e9e9e9; border-width: 0 1px; }
.cmd-icons button { width: 79px; display: grid; place-items: center; }
.cmd-group { display: flex; gap: 47px; height: 52px; padding: 0 28px 0 26px; border-right: 1px solid #e9e9e9; }
.cmd-more { margin-left: 26px; }
.cmd-details { margin: 0 -33px 0 auto; }

.panes { flex: 1; min-height: 0; display: flex; }
.sidebar { width: 261px; border-right: 1px solid #eaeaea; padding-top: 7px; }
.sidebar li { height: 40px; width: 256px; display: flex; align-items: center; gap: 3px; padding: 0 4px 0 29px; }
.sidebar li svg { width: 26px; height: 26px; }
.sidebar li.nested { padding-left: 42px; }
.sidebar li.selected { background: #d6d6d6; }
.sidebar li .pin { width: 18px; height: 18px; margin-left: auto; }
.sidebar hr { margin: 18px 16px 18px 3px; border: 0; height: 2px; background: #d8d8d8; }
.files { flex: 1; padding-left: 25px; }
table { border-collapse: collapse; table-layout: fixed; width: 993px; }
th, td { padding: 0; text-align: left; font-weight: 400; white-space: nowrap; }
th { height: 54px; vertical-align: top; color: #46597a; }
th span { display: block; height: 43px; padding-left: 10px; line-height: 46px; border-right: 1px solid #ebebeb; position: relative; }
.c-name { width: 426px; }
.c-date { width: 237px; }
.c-type { width: 198px; }
.c-name span { padding-left: 5px; }
.c-size span { margin-right: -3px; }
.sorted { position: absolute; left: 203px; top: 1px; }
td { height: 35px; padding-left: 10px; color: #6a6a6a; background-clip: padding-box; }
td:last-child { border-right: 6px solid transparent; }
td.name { padding-left: 8px; color: #222; }
td.name div { display: flex; align-items: center; gap: 8px; }
td.size { text-align: right; padding-right: 7px; }
.hover td { background-color: #dfedfa; }
.covered td { height: 450px; border: 0; }
.status { flex: none; height: 38px; display: flex; justify-content: space-between; align-items: center; color: #28304a; }
.status span { padding: 0 15px 0 10px; line-height: 20px; border-right: 1px solid #eee; }
.status button { width: 6px; height: 38px; background: #cce8fb; border: 1px solid #7ab8e4; border-right: 0; }

/* IrfanView, floating over the explorer */
.viewer {
  position: absolute; left: 277px; top: 310px; width: 1110px; height: 484px;
  display: flex; flex-direction: column; overflow: hidden;
  background: #fff; border: 2px solid #adadad; border-radius: 14px;
  box-shadow: 0 32px 70px rgba(0, 0, 0, 0.45), 0 0 20px rgba(0, 0, 0, 0.12);
}
.viewer-title { flex: none; height: 44px; display: flex; align-items: center; padding-left: 9px; background: #f1f3f4; white-space: nowrap; }
.viewer-title span { margin-left: 1px; }
.viewer-controls { display: flex; margin-left: auto; }
.viewer-controls button { width: 76px; height: 40px; display: grid; place-items: center; }
.viewer-menu { flex: none; height: 32px; display: flex; align-items: center; gap: 23px; padding: 2px 0 0 11px; }
.viewer-tools { flex: none; height: 35px; display: flex; align-items: center; background: #efefef; border: solid #c4c4c4; border-width: 1px 0 2px; }
.viewer-tools button { width: 30px; height: 30px; display: grid; place-items: center; }
.viewer-tools svg { width: 26px; height: 26px; }
.viewer-tools i { width: 1px; height: 28px; margin: 0 2px; background: #c4c4c4; }
.step { position: relative; margin: 0 2px; }
.step select { display: block; width: 58px; height: 29px; padding: 0 0 0 3px; font: inherit; font-size: 20px; line-height: 26px; color: #111; background: #fff; border: 1px solid #bbb; border-radius: 0; -webkit-appearance: none; appearance: none; }
.viewer-tools .step-arrow { position: absolute; right: 7px; top: 9px; width: 12px; height: 12px; pointer-events: none; }
.picture { flex: 1; display: flex; flex-direction: column; align-items: center; padding-right: 8px; border-bottom: 3px solid #000; color: #1a1a1a; font-family: Impact, "Anton", "Open Sans Condensed", "Roboto Condensed", "Noto Sans Condensed", "Liberation Sans", sans-serif; font-weight: 400; white-space: nowrap; }
.picture p { margin: 0; }
.headline { font-size: 88px; line-height: 116px; -webkit-text-stroke: 1px #1a1a1a; }
.picture .caption { margin-top: 104px; font-size: 30px; line-height: 56px; }
.viewer-status { flex: none; height: 36px; display: flex; align-items: center; background: #efefef; padding: 4px 0 0 0; white-space: nowrap; }
.viewer-status span { line-height: 32px; padding: 0 7px 0 4px; border-right: 1px solid #dcdcdc; }
.viewer-status span:first-child { padding-left: 0; }
.grip { margin: 10px 0 0 auto; }
.cursor { position: absolute; left: 1165px; top: 288px; }

/* Windows taskbar */
.taskbar { flex: none; height: 79px; display: flex; align-items: center; padding: 0 0 2px 84px; border-top: 2px solid #b4b2ae; background: linear-gradient(90deg, #dfe0da 0, #d9dbdd 15%, #eee8e3 34%, #f5e9dd 60%, #f4e9df 100%); }
.start { display: flex; width: 62px; }
.search { width: 360px; height: 52px; display: flex; align-items: center; padding: 0 12px 0 15px; background: #f4f4f3; border: 2px solid #c9c9c7; border-radius: 26px; }
.search input { flex: 1; width: 100px; margin-left: 16px; padding: 0; font: inherit; font-size: 21px; border: 0; background: none; }
.search input::placeholder { color: #5a5a5a; opacity: 1; }
.apps { flex: 1; display: flex; justify-content: space-between; padding: 0 40px 0 10px; }
.apps button { width: 62px; height: 64px; display: grid; place-items: center; position: relative; border-radius: 6px; }
.apps svg { width: 40px; height: 40px; }
.letter { font: 700 15px "Open Sans", sans-serif; fill: #fff; text-anchor: middle; }
.running::after { content: ""; position: absolute; left: 26px; bottom: 1px; width: 10px; height: 5px; border-radius: 3px; background: #8b857f; }
.current { background: #fcf5ef; box-shadow: 0 0 2px #d8cfc6; }
.current::after { left: 17px; width: 28px; background: #0b74d1; }
.tray { width: 245px; display: flex; align-items: center; padding-left: 3px; }
.tray svg + svg { margin-left: 11px; }
.tray svg:first-child + svg { margin-left: 30px; }
.clock { display: flex; flex-direction: column; align-items: flex-end; margin: 0 0 0 auto; line-height: 26px; }
.seek { flex: none; height: 25px; display: flex; overflow: hidden; background: #f0f0f0; font-size: 34px; line-height: 50px; color: #000; font-family: "Liberation Sans", sans-serif; }
.elapsed { width: 146px; padding-left: 12px; }
.seek input { -webkit-appearance: none; appearance: none; flex: 1; height: 26px; margin: 12px 67px 0 0; padding: 0 2px; background: linear-gradient(#b8b8b8, #d4d4d4); border-radius: 8px; }
.seek input::-webkit-slider-thumb { -webkit-appearance: none; width: 9px; height: 20px; border-radius: 5px; background: #2b83dc; }
.total { width: 31px; }
```
